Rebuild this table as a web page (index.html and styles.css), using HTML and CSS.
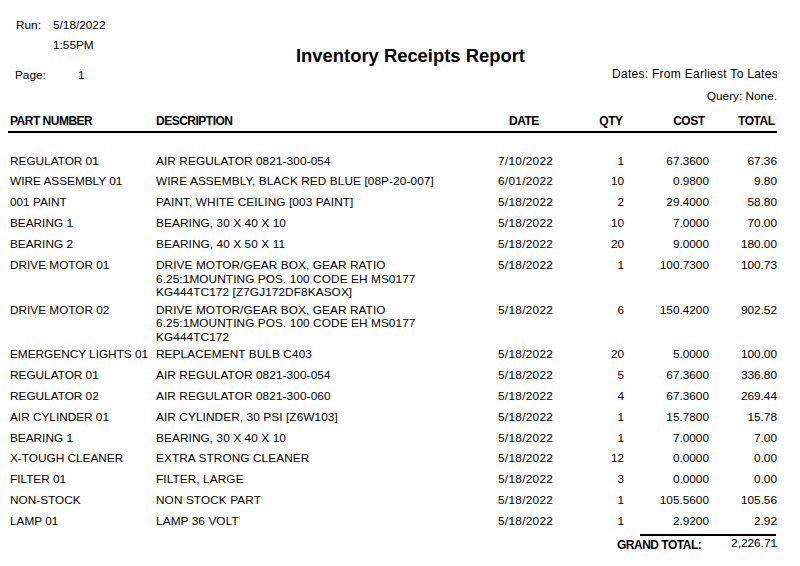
FILE: index.html
```html
<!DOCTYPE html>
<html>
<head>
<meta charset="utf-8">
<title>Inventory Receipts Report</title>
<link rel="stylesheet" href="styles.css">
</head>
<body>
<div class="page">
  <header class="top">
    <div class="top-left">
      <div class="meta run">
        <span class="meta-label">Run:</span>
        <span class="meta-val">5/18/2022<br>1:55PM</span>
      </div>
      <div class="meta pageno">
        <span class="meta-label page-label">Page:</span>
        <span class="meta-val">1</span>
      </div>
    </div>
    <div class="top-center">
      <h1 class="title">Inventory Receipts Report</h1>
    </div>
    <div class="top-right">
      <div class="dates">Dates: From Earliest To Latest</div>
      <div class="query">Query: None.</div>
    </div>
  </header>

  <section class="report">
    <div class="row head">
      <div class="c-part">PART NUMBER</div>
      <div class="c-desc">DESCRIPTION</div>
      <div class="c-date">DATE</div>
      <div class="c-qty">QTY</div>
      <div class="c-cost">COST</div>
      <div class="c-total">TOTAL</div>
    </div>

    <div class="tbody">
      <div class="row"><div class="c-part">REGULATOR 01</div><div class="c-desc">AIR REGULATOR 0821-300-054</div><div class="c-date">7/10/2022</div><div class="c-qty">1</div><div class="c-cost">67.3600</div><div class="c-total">67.36</div></div>
      <div class="row"><div class="c-part">WIRE ASSEMBLY 01</div><div class="c-desc">WIRE ASSEMBLY, BLACK RED BLUE [08P-20-007]</div><div class="c-date">6/01/2022</div><div class="c-qty">10</div><div class="c-cost">0.9800</div><div class="c-total">9.80</div></div>
      <div class="row"><div class="c-part">001 PAINT</div><div class="c-desc">PAINT, WHITE CEILING [003 PAINT]</div><div class="c-date">5/18/2022</div><div class="c-qty">2</div><div class="c-cost">29.4000</div><div class="c-total">58.80</div></div>
      <div class="row"><div class="c-part">BEARING 1</div><div class="c-desc">BEARING, 30 X 40 X 10</div><div class="c-date">5/18/2022</div><div class="c-qty">10</div><div class="c-cost">7.0000</div><div class="c-total">70.00</div></div>
      <div class="row"><div class="c-part">BEARING 2</div><div class="c-desc">BEARING, 40 X 50 X 11</div><div class="c-date">5/18/2022</div><div class="c-qty">20</div><div class="c-cost">9.0000</div><div class="c-total">180.00</div></div>
      <div class="row"><div class="c-part">DRIVE MOTOR 01</div><div class="c-desc">DRIVE MOTOR/GEAR BOX, GEAR RATIO<br>6.25:1MOUNTING POS. 100 CODE EH MS0177<br>KG444TC172 [Z7GJ172DF8KASOX]</div><div class="c-date">5/18/2022</div><div class="c-qty">1</div><div class="c-cost">100.7300</div><div class="c-total">100.73</div></div>
      <div class="row"><div class="c-part">DRIVE MOTOR 02</div><div class="c-desc">DRIVE MOTOR/GEAR BOX, GEAR RATIO<br>6.25:1MOUNTING POS. 100 CODE EH MS0177<br>KG444TC172</div><div class="c-date">5/18/2022</div><div class="c-qty">6</div><div class="c-cost">150.4200</div><div class="c-total">902.52</div></div>
      <div class="row"><div class="c-part">EMERGENCY LIGHTS 01</div><div class="c-desc">REPLACEMENT BULB C403</div><div class="c-date">5/18/2022</div><div class="c-qty">20</div><div class="c-cost">5.0000</div><div class="c-total">100.00</div></div>
      <div class="row"><div class="c-part">REGULATOR 01</div><div class="c-desc">AIR REGULATOR 0821-300-054</div><div class="c-date">5/18/2022</div><div class="c-qty">5</div><div class="c-cost">67.3600</div><div class="c-total">336.80</div></div>
      <div class="row"><div class="c-part">REGULATOR 02</div><div class="c-desc">AIR REGULATOR 0821-300-060</div><div class="c-date">5/18/2022</div><div class="c-qty">4</div><div class="c-cost">67.3600</div><div class="c-total">269.44</div></div>
      <div class="row"><div class="c-part">AIR CYLINDER 01</div><div class="c-desc">AIR CYLINDER, 30 PSI [Z6W103]</div><div class="c-date">5/18/2022</div><div class="c-qty">1</div><div class="c-cost">15.7800</div><div class="c-total">15.78</div></div>
      <div class="row"><div class="c-part">BEARING 1</div><div class="c-desc">BEARING, 30 X 40 X 10</div><div class="c-date">5/18/2022</div><div class="c-qty">1</div><div class="c-cost">7.0000</div><div class="c-total">7.00</div></div>
      <div class="row"><div class="c-part">X-TOUGH CLEANER</div><div class="c-desc">EXTRA STRONG CLEANER</div><div class="c-date">5/18/2022</div><div class="c-qty">12</div><div class="c-cost">0.0000</div><div class="c-total">0.00</div></div>
      <div class="row"><div class="c-part">FILTER 01</div><div class="c-desc">FILTER, LARGE</div><div class="c-date">5/18/2022</div><div class="c-qty">3</div><div class="c-cost">0.0000</div><div class="c-total">0.00</div></div>
      <div class="row"><div class="c-part">NON-STOCK</div><div class="c-desc">NON STOCK PART</div><div class="c-date">5/18/2022</div><div class="c-qty">1</div><div class="c-cost">105.5600</div><div class="c-total">105.56</div></div>
      <div class="row"><div class="c-part">LAMP 01</div><div class="c-desc">LAMP 36 VOLT</div><div class="c-date">5/18/2022</div><div class="c-qty">1</div><div class="c-cost">2.9200</div><div class="c-total">2.92</div></div>
    </div>

    <div class="grand-rule"></div>
    <div class="grand">
      <div class="grand-label">GRAND TOTAL:</div>
      <div class="grand-val">2,226.71</div>
    </div>
  </section>
</div>
</body>
</html>
```

FILE: styles.css
```css
* { box-sizing: border-box; }

html, body {
  margin: 0;
  padding: 0;
  background: #fff;
}

body {
  font-family: "Liberation Sans", Arial, sans-serif;
  font-size: 11.8px;
  color: #000;
}

.page {
  width: 777px;
  overflow: hidden;
}

/* ---------- top block ---------- */
.top {
  display: grid;
  grid-template-columns: 280px 332px 165px;
}

.top-left {
  padding-top: 14.8px;
}

.meta {
  display: flex;
  line-height: 20px;
}

.run .meta-label {
  width: 53px;
  padding-left: 16px;
}

.pageno {
  margin-top: 10px;
}

.page-label {
  width: 78px;
  padding-left: 15px;
}

.top-center {
  padding-top: 44.8px;
}

.title {
  margin: 0;
  padding-left: 16px;
  font-size: 18.4px;
  font-weight: bold;
  line-height: 22px;
  white-space: nowrap;
}

.top-right {
  padding-top: 63.3px;
  line-height: 22px;
}

.dates {
  font-size: 12px;
  letter-spacing: 0.28px;
  white-space: nowrap;
  overflow: hidden;
}

.query {
  text-align: right;
  white-space: nowrap;
}

/* ---------- table ---------- */
.report {
  margin-left: 8px;
  width: 769px;
}

.row {
  display: grid;
  grid-template-columns: 148px 342px 80px 46px 85px 68px;
  line-height: 13.5px;
  min-height: 20.9px;
  padding: 2px 0;
}

.c-part { padding-left: 2px; white-space: nowrap; }
.c-desc { white-space: nowrap; letter-spacing: 0.1px; }
.c-date { letter-spacing: 0.3px; }
.c-qty, .c-cost, .c-total { text-align: right; }

.head {
  margin-top: 6.6px;
  min-height: 0;
  padding: 0 0 3.6px;
  line-height: 14px;
  font-size: 12px;
  font-weight: bold;
  letter-spacing: -0.5px;
  border-bottom: 2px solid #000;
}

.head .c-desc { letter-spacing: -0.5px; }
.head .c-date { padding-left: 11px; letter-spacing: -0.5px; }
.head .c-qty { padding-right: 1.5px; }
.head .c-cost { padding-right: 4.5px; }
.head .c-total { padding-right: 2.5px; }

.tbody {
  margin-top: 19.1px;
}

.grand-rule {
  margin-left: 632px;
  width: 136px;
  border-top: 2px solid #000;
}

.grand {
  display: flex;
  align-items: flex-start;
  line-height: 14px;
}

.grand-label {
  margin-left: 609px;
  padding-top: 2px;
  font-size: 12px;
  font-weight: bold;
  letter-spacing: -0.5px;
}

.grand-val {
  margin-left: auto;
}
```
